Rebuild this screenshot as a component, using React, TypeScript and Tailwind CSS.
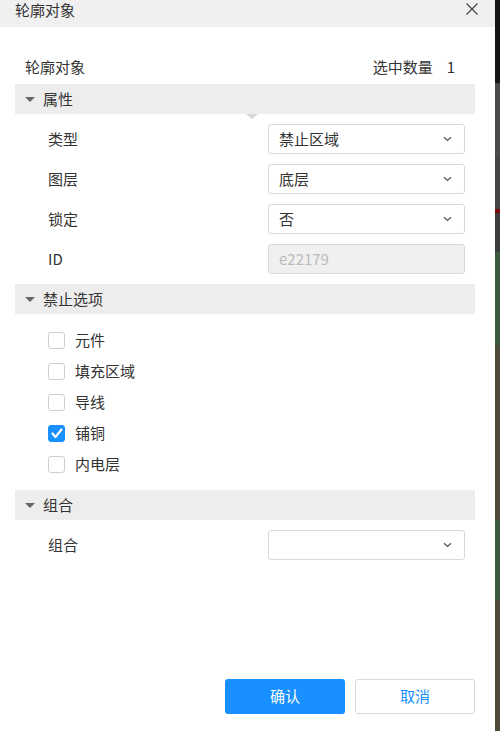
import { useState } from 'react';

const font = { fontFamily: '"Noto Sans CJK SC", "Liberation Sans", sans-serif' };

function Chevron() {
  return (
    <svg width="9" height="6" viewBox="0 0 9 6" className="shrink-0">
      <path d="M1 1.2 L4.5 4.5 L8 1.2" fill="none" stroke="#555" strokeWidth="1.2" />
    </svg>
  );
}

function SectionHeader({ title, arrow }: { title: string; arrow?: boolean }) {
  return (
    <div className="relative flex h-[30px] items-center bg-[#ededed] pl-[10px]">
      <svg width="10" height="5" viewBox="0 0 10 5" className="mr-[8px]">
        <path d="M0 0 H10 L5 5 Z" fill="#666" />
      </svg>
      <span className="text-[15px] text-[#333]">{title}</span>
      {arrow && (
        <div className="absolute left-[231px] top-[30px] h-0 w-0 border-x-[6px] border-t-[5px] border-x-transparent border-t-[#d8d8d8]" />
      )}
    </div>
  );
}

function SelectRow({ label, value, disabled }: { label: string; value: string; disabled?: boolean }) {
  return (
    <div className="flex h-[30px] items-center pl-[33px] pr-[10px]">
      <span className="flex-1 text-[15px] text-[#333]">{label}</span>
      <div
        className={`flex h-[30px] w-[197px] items-center justify-between rounded-[3px] border border-[#d9d9d9] pl-[10px] pr-[12px] text-[15px] ${
          disabled ? 'bg-[#f0f0f0] text-[#bbbbbb]' : 'bg-white text-[#333]'
        }`}
      >
        <span>{value}</span>
        {!disabled && <Chevron />}
      </div>
    </div>
  );
}

const options = [
  { label: '元件', checked: false },
  { label: '填充区域', checked: false },
  { label: '导线', checked: false },
  { label: '铺铜', checked: true },
  { label: '内电层', checked: false },
];

export default function App() {
  const [checks, setChecks] = useState(options.map((o) => o.checked));

  return (
    <div className="flex h-[731px] w-[500px] overflow-hidden" style={font}>
      <div className="flex w-[495px] flex-col bg-white">
        {/* Title bar */}
        <div className="flex h-[27px] items-start justify-between bg-[#f0f0f0] pl-[15px] pr-[17px]">
          <span className="text-[15px] leading-[20px] text-[#333]">轮廓对象</span>
          <svg width="12" height="12" viewBox="0 0 12 12" className="mt-[3px]">
            <path d="M0.5 0.5 L11.5 11.5 M11.5 0.5 L0.5 11.5" stroke="#444" strokeWidth="1.2" />
          </svg>
        </div>

        <div className="pl-[15px] pr-[20px]">
          <div className="mt-[30px] flex h-[20px] items-center justify-between pl-[10px] pr-[20px] text-[15px] text-[#333]">
            <span>轮廓对象</span>
            <span>
              选中数量<span className="ml-[14px]">1</span>
            </span>
          </div>

          {/* 属性 */}
          <div className="mt-[7px]">
            <SectionHeader title="属性" arrow />
            <div className="flex flex-col gap-[10px] py-[10px]">
              <SelectRow label="类型" value="禁止区域" />
              <SelectRow label="图层" value="底层" />
              <SelectRow label="锁定" value="否" />
              <SelectRow label="ID" value="e22179" disabled />
            </div>
          </div>

          {/* 禁止选项 */}
          <SectionHeader title="禁止选项" />
          <div className="flex flex-col pb-[10px] pt-[11px]">
            {options.map((o, i) => (
              <label key={o.label} className="flex h-[31px] items-center pl-[33px]">
                <span
                  onClick={() => setChecks(checks.map((c, j) => (j === i ? !c : c)))}
                  className={`flex h-[17px] w-[17px] items-center justify-center rounded-[3px] border ${
                    checks[i] ? 'border-[#1890ff] bg-[#1890ff]' : 'border-[#cfcfcf] bg-white'
                  }`}
                >
                  {checks[i] && (
                    <svg width="12" height="11" viewBox="0 0 12 11">
                      <path d="M1.5 5.5 L4.5 9 L10.5 1.5" fill="none" stroke="white" strokeWidth="2.2" strokeLinecap="round" strokeLinejoin="round" />
                    </svg>
                  )}
                </span>
                <span className="ml-[10px] text-[15px] text-[#333]">{o.label}</span>
              </label>
            ))}
          </div>

          {/* 组合 */}
          <SectionHeader title="组合" />
          <div className="py-[10px]">
            <SelectRow label="组合" value="" />
          </div>
        </div>

        {/* Footer */}
        <div className="mt-auto flex justify-end gap-[10px] pb-[17px] pr-[20px]">
          <button className="h-[35px] w-[120px] rounded-[3px] bg-[#1890ff] text-[15px] text-white">确认</button>
          <button className="h-[35px] w-[120px] rounded-[3px] border border-[#d9d9d9] bg-white text-[15px] text-[#1890ff]">
            取消
          </button>
        </div>
      </div>

      {/* Background app peeking through on the right */}
      <div className="flex w-[5px] flex-col">
        <div className="h-[83px] bg-[#151515]" />
        <div className="h-[74px] bg-[#4a4a4a]" />
        <div className="h-[52px] bg-[#454545]" />
        <div className="h-[4px] bg-[#7a0a0a]" />
        <div className="h-[39px] bg-[#3c3c3c]" />
        <div className="h-[93px] bg-[#3b5a3d]" />
        <div className="h-[175px] bg-[#4d4b38]" />
        <div className="h-[80px] bg-[#3b5a3d]" />
        <div className="flex-1 bg-[#4d4b38]" />
      </div>
    </div>
  );
}
